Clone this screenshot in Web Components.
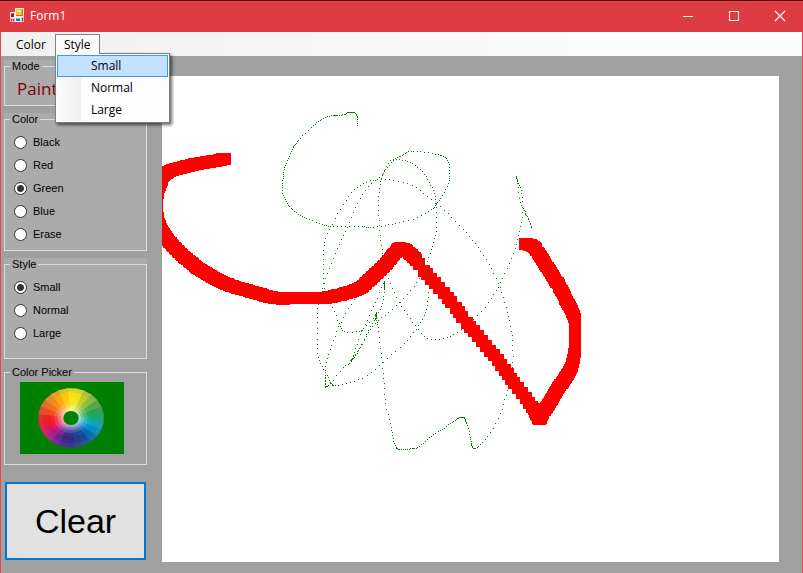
<!DOCTYPE html>
<html lang="en">
<head>
<meta charset="utf-8">
<title>Form1</title>
<style>
  html, body { height: 100%; }
  body { margin: 0; font: 12px/16px "Open Sans", "Noto Sans", sans-serif; color: #000; }
</style>
</head>
<body>
<form-window>
  <title-bar slot="title">Form1</title-bar>
  <menu-strip slot="menu">
    <menu-entry>Color</menu-entry>
    <menu-entry open items="Small,Normal,Large" selected="Small">Style</menu-entry>
  </menu-strip>
  <tool-panel slot="tools">
    <group-box tinted caption="Mode"><mode-label>Paint</mode-label></group-box>
    <radio-group caption="Color" options="Black,Red,Green,Blue,Erase" value="Green"></radio-group>
    <radio-group class="roomy" caption="Style" options="Small,Normal,Large" value="Small"></radio-group>
    <group-box caption="Color Picker"><color-wheel></color-wheel></group-box>
    <clear-button>Clear</clear-button>
  </tool-panel>
  <paint-surface slot="surface"></paint-surface>
</form-window>

<script>
const define = (name, html, setup) => customElements.define(name, class extends HTMLElement {
  connectedCallback() {
    if (this.shadowRoot) return;
    const root = this.attachShadow({ mode: 'open' });
    root.innerHTML = html;
    if (setup) setup(this, root);
  }
});

define('form-window', `
<style>
  :host { display: grid; grid-template-rows: auto auto 1fr; min-height: 100vh; box-sizing: border-box;
          border: solid #e5484d; border-width: 0 1px; background: #a0a0a0; }
  main { display: grid; grid-template-columns: auto 1fr; gap: 15px; padding: 4px 23px 11px 3px; }
  .surface { display: grid; margin-top: 16px; }
</style>
<slot name="title"></slot>
<slot name="menu"></slot>
<main><slot name="tools"></slot><div class="surface"><slot name="surface"></slot></div></main>`);

define('title-bar', `
<style>
  :host { display: block; background: #dd3d42; margin: 0 -1px; }
  header { display: flex; align-items: center; height: 30px; border-top: 1px solid #5c0007;
           box-shadow: inset 0 1px #e0474c; padding: 0 0 1px 9px; color: #fff; }
  .icon { width: 16px; height: 16px; margin-right: 5px; }
  h1 { flex: 1; margin: 0; font: inherit; }
  button { width: 46px; height: 30px; border: 0; padding: 0; background: none; color: inherit; display: grid; place-items: center; }
</style>
<header>
  <svg class="icon" viewBox="0 0 16 16" shape-rendering="crispEdges" aria-hidden="true">
    <path fill="#c9c4c4" d="M1 1h14v13H1z"/>
    <path fill="#dd3d42" d="M1 1h5v3H1z"/>
    <path fill="#f5efdc" d="M6 0h9v9H6z"/><path fill="#b07c12" d="M7 1h7v7H7z"/>
    <path fill="#f8bd2c" d="M7 1h6v6H7z"/><path fill="#ffe08a" d="M8 2h4v2H8z"/>
    <path fill="#eee" d="M1 4h5v6H1z"/><path fill="#a51718" d="M2 5h3v4H2z"/><path fill="#e8705b" d="M2 5h2v1H2z"/>
    <path fill="#eee" d="M6 9h6v5H6z"/><path fill="#2c66c7" d="M7 10h4v3H7z"/><path fill="#78adf2" d="M7 10h4v1H7z"/>
    <path fill="#d42427" d="M2 11h1v2H2zM4 11h1v2H4zM13 10h1v3h-1z"/>
  </svg>
  <h1><slot></slot></h1>
  <button aria-label="Minimize"><svg width="12" height="12" shape-rendering="crispEdges"><path fill="#fff" d="M1 6h10v1H1z"/></svg></button>
  <button aria-label="Maximize"><svg width="12" height="12" shape-rendering="crispEdges"><path fill="#fff" fill-rule="evenodd" d="M1 1h10v10H1zM2 2v8h8V2z"/></svg></button>
  <button aria-label="Close"><svg width="12" height="12"><path stroke="#fff" stroke-width="1.1" d="M1 1l10 10M11 1L1 11"/></svg></button>
</header>`);

define('menu-strip', `
<style>
  :host { display: block; background: linear-gradient(90deg, #f0f0f0, #fcfcfc 80%); }
  nav { display: flex; padding: 2px 4px; height: 20px; }
</style>
<nav><slot></slot></nav>`);

define('menu-entry', `
<style>
  :host { display: block; position: relative; }
  button { font: inherit; color: inherit; border: 0; background: none; text-align: left; display: block; }
  .top { height: 20px; padding: 0 8px; border: 1px solid transparent; border-bottom: 0; line-height: 18px; margin-left: 2px; }
  :host([open]) .top { border-color: #808080; background: #fbfbfb; position: relative; z-index: 2; margin-left: 0; }
  .drop { position: absolute; left: 0; top: 19px; z-index: 1; width: 111px; padding: 1px; border: 1px solid #808080;
          background: #fdfdfd; box-shadow: 2px 2px 3px rgba(0,0,0,.6); }
  .list { background: linear-gradient(90deg, #fbfbfb, #f0f0f0) 1px 0 / 23px 100% no-repeat; }
  .list button { width: 100%; height: 22px; padding: 0 0 0 33px; border: 1px solid transparent; line-height: 20px; }
  .list .on { background: #c4e1ff; border-color: #3399ff; }
</style>
<button class="top" aria-haspopup="menu"><slot></slot></button>`, (el, root) => {
  if (!el.hasAttribute('open')) return;
  const drop = document.createElement('div');
  drop.className = 'drop';
  drop.innerHTML = '<div class="list" role="menu">' + el.getAttribute('items').split(',').map(t =>
    `<button role="menuitem" class="${t === el.getAttribute('selected') ? 'on' : ''}">${t}</button>`).join('') + '</div>';
  root.append(drop);
});

define('tool-panel', `
<style>
  :host { display: flex; flex-direction: column; gap: 7px; width: 143px;
          font: 11px/13px "Liberation Sans", Arial, sans-serif; }
  ::slotted(clear-button) { margin-top: 10px; }
</style>
<slot></slot>`);

define('group-box', `
<style>
  :host { display: block; }
  :host([tinted]) { background: #ababab; }
  fieldset { margin: 0; padding: 0 8px; border: 1px solid #dcdcdc; min-width: 0; }
  legend { padding: 0 2px; margin-left: -3px; height: 13px; }
</style>
<fieldset><legend></legend><slot></slot></fieldset>`, (el, root) => {
  root.querySelector('legend').textContent = el.getAttribute('caption');
});

define('mode-label', `
<style>
  :host { display: block; color: #800000; font: 17px/24px "Open Sans", sans-serif; padding: 4px; }
</style>
<slot></slot>`);

define('radio-group', `
<style>
  :host { display: block; }
  .rows { display: grid; gap: 7px; padding: 8px 1px; }
  :host(.roomy) .rows { padding-bottom: 17px; }
  label { display: flex; align-items: center; gap: 6px; height: 16px; }
  input { appearance: none; margin: 0; width: 13px; height: 13px; border: 1px solid #333; border-radius: 50%; background: #fff; }
  input:checked { background: radial-gradient(circle, #333 3px, #fff 4px); }
</style>
<group-box tinted><div class="rows"></div></group-box>`, (el, root) => {
  const box = root.querySelector('group-box');
  box.setAttribute('caption', el.getAttribute('caption'));
  box.shadowRoot.querySelector('legend').textContent = el.getAttribute('caption');
  root.querySelector('.rows').innerHTML = el.getAttribute('options').split(',').map(t =>
    `<label><input type="radio" name="choice" value="${t}" ${t === el.getAttribute('value') ? 'checked' : ''}>${t}</label>`).join('');
});

define('color-wheel', `
<style>
  :host { display: block; width: 104px; padding: 3px 7px 10px; }
  svg { display: block; width: 104px; height: 72px; background: #008000; }
</style>
<svg viewBox="0 0 104 72" role="img" aria-label="Color wheel"></svg>`, (el, root) => {
  const hues = [[252,230,10],[240,230,25],[190,208,40],[140,192,60],[80,172,75],[30,168,80],[15,172,120],[10,165,190],[0,140,210],[5,105,178],[15,75,155],[30,60,145],
    [42,42,138],[60,35,138],[105,35,142],[170,25,138],[220,20,100],[238,22,45],[240,32,32],[242,72,32],[245,108,30],[248,140,25],[252,170,15],[254,206,5]];
  const radii = [1, .86, .74, .62, .5, .4, .31, .22];
  const tone = [[128, .2], [128, .06], [255, 0], [255, .04], [255, .18], [255, .38], [255, .58]];
  let out = '';
  const at = (r, a) => `${(51 + 33 * r * Math.sin(a)).toFixed(2)} ${(36 - 30 * r * Math.cos(a)).toFixed(2)}`;
  hues.forEach((c, i) => {
    const a = (i - .5) * Math.PI / 12, b = a + Math.PI / 12 + .03;
    tone.forEach(([t, k], j) => {
      const rgb = c.map(v => Math.round(v + (t - v) * k));
      const inner = radii[j + 1] - .02;
      out += `<path fill="rgb(${rgb})" d="M${at(radii[j], a)}L${at(radii[j], b)}L${at(inner, b)}L${at(inner, a)}z"/>`;
    });
  });
  root.querySelector('svg').innerHTML = out + '<ellipse cx="51" cy="36" rx="7.6" ry="7" fill="#008000"/>';
});

define('clear-button', `
<style>
  :host { display: block; padding: 0 1px; }
  button { display: block; width: 100%; height: 78px; border: 2px solid #0078d7; background: #e1e1e1; color: #000;
           padding: 0; font: 34px/40px "Liberation Sans", Arial, sans-serif; }
</style>
<button><slot></slot></button>`);

// Form coordinates of the surface's top-left corner.
const ORIGIN = [162, 76];

// Top-left corners of the 12px square brush.
const RED = [
  [[219,153],[202,156],[185,159],[175,162],[166,164],[162,166],[158,169],[155,176],[152,185],[151,195],[151,206],[153,218],[159,230],[169,242],[184,256],[198,266],[218,277],[243,285],[270,292],[290,292],[316,292],[333,289],[352,283],[362,275],[378,260],[388,248],[392,243],[398,243],[403,247],[410,254],[418,265],[445,296],[461,317],[488,349],[508,377],[526,401],[533,413],[534,413],[540,402],[551,384],[563,366],[568,350],[569,338],[569,316],[567,308],[561,296],[556,285],[545,267],[532,247],[528,241],[523,239],[519,238]]
];

// Points visited by the 1px brush.
const GREEN = [
  [[357,125],[357,117],[355,113],[352,112],[348,112],[344,114],[337,115],[333,115],[325,117],[318,121],[311,127],[300,138],[295,144],[292,149],[288,158],[284,167],[283,176],[282,185],[283,195],[287,203],[292,209],[300,215],[309,219],[322,224],[330,226],[345,226],[362,226],[370,227],[385,225],[399,222],[417,217],[431,209],[436,204],[442,195],[448,183],[449,173],[448,162],[443,156],[435,154],[420,151],[408,151],[402,155],[395,158],[387,167],[382,175],[379,188],[378,205],[379,225],[381,245],[384,262],[390,283],[399,302],[415,325],[427,338],[443,338],[457,332],[477,315],[491,298],[502,278],[513,253],[518,235],[522,217],[522,197],[519,185],[516,178],[516,176],[517,183],[520,202],[524,210],[526,215],[529,221],[531,227]],
  [[325,387],[325,381],[325,375],[326,362],[333,340],[343,317],[360,291],[372,270],[385,258],[398,254],[412,254],[420,258],[426,267],[429,277],[428,297],[425,312],[418,325],[407,340],[387,358],[367,375],[350,382],[335,385],[331,383],[327,375],[320,363],[317,348],[317,313],[319,297],[327,273],[337,248],[347,227],[357,203],[368,186],[382,174],[390,160],[402,160],[412,163],[422,171],[429,182],[434,193],[436,207],[436,227],[433,242],[428,257],[419,278],[400,302],[378,320],[368,332],[360,347],[354,357],[351,360]],
  [[384,289],[384,285],[384,281],[377,298],[363,328],[355,348],[351,361],[343,367],[330,383],[325,386]],
  [[384,281],[384,285],[384,289],[382,303],[376,315],[363,328],[359,331],[344,331],[339,323],[332,307],[325,292],[323,273],[323,250],[327,233],[340,209],[351,192],[363,183],[377,179],[393,180],[412,185],[427,196],[444,210],[463,229],[483,255],[498,283],[509,320],[512,340],[512,367],[507,390],[500,413],[490,432],[480,444],[474,448],[472,447],[471,444],[470,437],[467,425],[465,420],[463,417],[460,417],[456,419],[450,423],[442,429],[433,434],[425,441],[417,447],[412,448],[405,449],[398,449],[395,445],[392,435],[390,423],[385,403],[383,373],[380,348],[378,327],[376,318],[376,313],[375,318],[368,330],[359,348],[352,358],[350,360]],
  [[376,312],[375,315],[376,318],[375,319]]
];

function stamps(points, gap, size) {
  let d = '';
  const box = (x, y) => { d += `M${Math.round(x) - ORIGIN[0]} ${Math.round(y) - ORIGIN[1]}h${size}v${size}h-${size}z`; };
  for (let i = 0; i < points.length - 1; i++) {
    const p = [points[Math.max(i - 1, 0)], points[i], points[i + 1], points[Math.min(i + 2, points.length - 1)]];
    const n = Math.max(1, Math.round(Math.hypot(p[2][0] - p[1][0], p[2][1] - p[1][1]) / gap(p[1], p[2])));
    for (let s = 0; s < n; s++) {
      const t = s / n;
      const [x, y] = [0, 1].map(k => .5 * (2 * p[1][k] + (p[2][k] - p[0][k]) * t
        + (2 * p[0][k] - 5 * p[1][k] + 4 * p[2][k] - p[3][k]) * t * t
        + (3 * p[1][k] - p[0][k] - 3 * p[2][k] + p[3][k]) * t * t * t));
      box(x, y);
    }
  }
  box(...points[points.length - 1]);
  return d;
}

define('paint-surface', `
<style>
  :host { display: block; position: relative; background: #fff; overflow: hidden; }
  svg { position: absolute; inset: 0; width: 100%; height: 100%; }
</style>
<svg shape-rendering="crispEdges" role="img" aria-label="Drawing"></svg>`, (el, root) => {
  const speed = (a, b) => Math.min(5, Math.max(1, Math.hypot(b[0] - a[0], b[1] - a[1]) / 4));
  const redGap = (a, b) => a[0] >= 410 && b[1] > a[1] && b[0] < 527 ? 6 : 2;
  root.querySelector('svg').innerHTML =
    RED.map(s => `<path fill="#f00" fill-rule="nonzero" d="${stamps(s, redGap, 12)}"/>`).join('') +
    GREEN.map(s => `<path fill="#008000" d="${stamps(s, speed, 1)}"/>`).join('');
});
</script>
</body>
</html>
